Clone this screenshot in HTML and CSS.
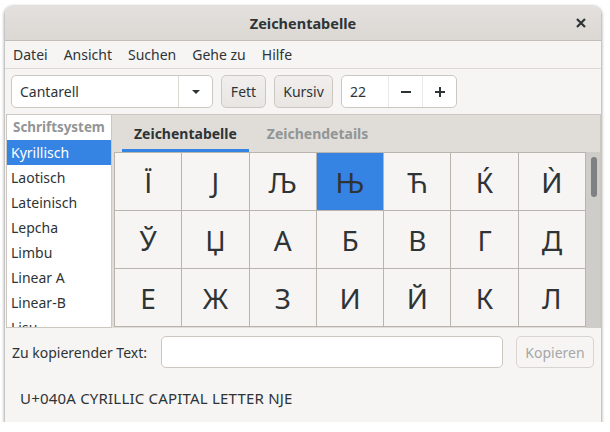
FILE: index.html
```html
<!DOCTYPE html>
<html lang="de">
<head>
<meta charset="utf-8">
<title>Zeichentabelle</title>
<link rel="stylesheet" href="styles.css">
</head>
<body>
<div class="window">
  <header class="titlebar">
    <span class="title-spacer"></span>
    <span class="title">Zeichentabelle</span>
    <span class="close">
      <svg width="10" height="10" viewBox="0 0 10 10"><path d="M1 1L9 9M9 1L1 9" stroke="#2e3436" stroke-width="2.2" stroke-linecap="butt"/></svg>
    </span>
  </header>
  <nav class="menubar">
    <span class="menu-item">Datei</span>
    <span class="menu-item">Ansicht</span>
    <span class="menu-item">Suchen</span>
    <span class="menu-item">Gehe zu</span>
    <span class="menu-item">Hilfe</span>
  </nav>
  <div class="toolbar">
    <div class="combo">
      <span class="combo-text">Cantarell</span>
      <span class="combo-arrow">
        <svg width="10" height="6" viewBox="0 0 10 6"><path d="M1 1H9L5 5Z" fill="#2e3436"/></svg>
      </span>
    </div>
    <button class="btn btn-fett">Fett</button>
    <button class="btn btn-kursiv">Kursiv</button>
    <div class="spin">
      <span class="spin-value">22</span>
      <span class="spin-btn">
        <svg width="12" height="12" viewBox="0 0 12 12"><path d="M1 6H11" stroke="#2e3436" stroke-width="2"/></svg>
      </span>
      <span class="spin-btn">
        <svg width="12" height="12" viewBox="0 0 12 12"><path d="M1 6H11M6 1V11" stroke="#2e3436" stroke-width="2"/></svg>
      </span>
    </div>
  </div>
  <div class="main">
    <div class="list">
      <div class="list-header">Schriftsystem</div>
      <div class="list-row selected">Kyrillisch</div>
      <div class="list-row">Laotisch</div>
      <div class="list-row">Lateinisch</div>
      <div class="list-row">Lepcha</div>
      <div class="list-row">Limbu</div>
      <div class="list-row">Linear A</div>
      <div class="list-row">Linear-B</div>
      <div class="list-row">Lisu</div>
    </div>
    <div class="notebook">
      <div class="tabs">
        <span class="tab active">Zeichentabelle</span>
        <span class="tab">Zeichendetails</span>
      </div>
      <div class="page">
        <div class="chargrid">
          <div class="cell">Ї</div><div class="cell">Ј</div><div class="cell">Љ</div><div class="cell sel">Њ</div><div class="cell">Ћ</div><div class="cell">Ќ</div><div class="cell">Ѝ</div>
          <div class="cell">Ў</div><div class="cell">Џ</div><div class="cell">А</div><div class="cell">Б</div><div class="cell">В</div><div class="cell">Г</div><div class="cell">Д</div>
          <div class="cell">Е</div><div class="cell">Ж</div><div class="cell">З</div><div class="cell">И</div><div class="cell">Й</div><div class="cell">К</div><div class="cell">Л</div>
        </div>
        <div class="scrollbar"><div class="thumb"></div></div>
      </div>
    </div>
  </div>
  <div class="copyrow">
    <label class="copy-label">Zu kopierender Text:</label>
    <span class="entry"></span>
    <button class="btn btn-copy">Kopieren</button>
  </div>
  <div class="status">U+040A CYRILLIC CAPITAL LETTER NJE</div>
</div>
</body>
</html>
```
FILE: styles.css
```css
* { box-sizing: border-box; }
html, body {
  margin: 0;
  background: #ffffff;
}
body {
  font-family: "Noto Sans", "DejaVu Sans", sans-serif;
  font-size: 14px;
  color: #2e3436;
}
.window {
  margin: 6px 0 0 5px;
  width: 596px;
  height: 416px;
  background: #f6f5f4;
  border-radius: 8px 8px 0 0;
  box-shadow: 0 1px 3px 1px rgba(0, 0, 0, 0.35);
  display: flex;
  flex-direction: column;
  overflow: hidden;
}
.titlebar {
  flex: none;
  height: 35px;
  background: linear-gradient(#e3e0dd, #dbd8d4);
  border-bottom: 1px solid #c4bdb7;
  display: grid;
  grid-template-columns: 1fr auto 1fr;
  align-items: center;
}
.title {
  font-weight: bold;
  font-size: 14.5px;
}
.close {
  justify-self: end;
  margin-right: 15px;
  display: flex;
}
.menubar {
  flex: none;
  height: 28px;
  border-bottom: 1px solid #dcd8d4;
  display: flex;
  align-items: center;
  padding-left: 8px;
  gap: 16px;
}
.toolbar {
  flex: none;
  height: 45px;
  display: flex;
  align-items: center;
  padding: 0 6px;
}
.combo {
  width: 202px;
  height: 33px;
  background: #ffffff;
  border: 1px solid #cdc7c2;
  border-radius: 5px;
  display: flex;
  align-items: center;
}
.combo-text {
  flex: 1;
  padding-left: 8px;
}
.combo-arrow {
  width: 34px;
  height: 100%;
  border-left: 1px solid #dcd8d4;
  display: flex;
  align-items: center;
  justify-content: center;
}
.btn {
  font: inherit;
  color: #2e3436;
  height: 33px;
  padding: 0;
  border: 1px solid #cdc7c2;
  border-radius: 5px;
  background: linear-gradient(#f1efee, #e8e5e2);
  margin-left: 8px;
}
.btn-fett { width: 45px; }
.btn-kursiv { width: 59px; }
.spin {
  margin-left: 8px;
  width: 116px;
  height: 33px;
  background: #ffffff;
  border: 1px solid #cdc7c2;
  border-radius: 5px;
  display: flex;
  align-items: center;
}
.spin-value {
  width: 46px;
  padding-left: 8px;
  height: 100%;
  display: flex;
  align-items: center;
}
.spin-btn {
  width: 34px;
  height: 100%;
  border-left: 1px solid #ebe8e5;
  display: flex;
  align-items: center;
  justify-content: center;
}
.main {
  flex: none;
  height: 214px;
  display: flex;
}
.list {
  width: 106px;
  margin-left: 1px;
  background: #ffffff;
  border: 1px solid #cdc7c2;
  overflow: hidden;
}
.list-header {
  height: 25px;
  line-height: 25px;
  padding-left: 6px;
  font-weight: bold;
  font-size: 13.4px;
  color: #929595;
  white-space: nowrap;
}
.list-row {
  height: 25px;
  line-height: 25px;
  padding-left: 4px;
}
.list-row.selected {
  background: #3584e4;
  color: #ffffff;
}
.notebook {
  flex: 1;
  display: flex;
  flex-direction: column;
  background: #e0ddd9;
  border-top: 1px solid #cdc7c2;
  border-right: 1px solid #cdc7c2;
  overflow: hidden;
}
.tabs {
  flex: none;
  height: 37px;
  display: flex;
  padding-left: 10px;
  gap: 6px;
}
.tab {
  padding: 0 12px;
  display: flex;
  align-items: center;
  font-weight: bold;
  color: #929595;
  border-bottom: 3px solid transparent;
  padding-top: 2px;
}
.tab.active {
  color: #2e3436;
  border-bottom-color: #3584e4;
}
.page {
  flex: 1;
  display: flex;
  padding-left: 2px;
  overflow: hidden;
}
.chargrid {
  width: 472px;
  flex: none;
  display: grid;
  grid-template-columns: repeat(7, 1fr);
  grid-auto-rows: 57px;
  gap: 1px;
  padding: 1px;
  background: #bab4ae;
  align-self: start;
}
.cell {
  background: #f6f5f4;
  display: flex;
  align-items: center;
  justify-content: center;
  font-size: 28px;
  color: #2e3436;
}
.cell.sel {
  background: #3584e4;
  color: #2e3436;
}
.scrollbar {
  flex: 1;
  background: #cfcdca;
  padding: 5px 0 0 5px;
}
.thumb {
  width: 6px;
  height: 40px;
  border-radius: 3px;
  background: #7e8081;
}
.copyrow {
  flex: none;
  display: flex;
  align-items: center;
  padding: 8px 7px 0 7px;
}
.copy-label {
  margin-right: 14px;
}
.entry {
  flex: 1;
  height: 32px;
  background: #ffffff;
  border: 1px solid #cdc7c2;
  border-radius: 5px;
}
.btn-copy {
  width: 78px;
  height: 32px;
  margin-left: 13px;
  background: #f6f5f4;
  color: #a5a7a7;
  border-color: #d8d4d0;
}
.status {
  padding: 21px 0 0 15px;
  line-height: 18px;
  font-size: 15px;
  letter-spacing: 0.2px;
}
```
